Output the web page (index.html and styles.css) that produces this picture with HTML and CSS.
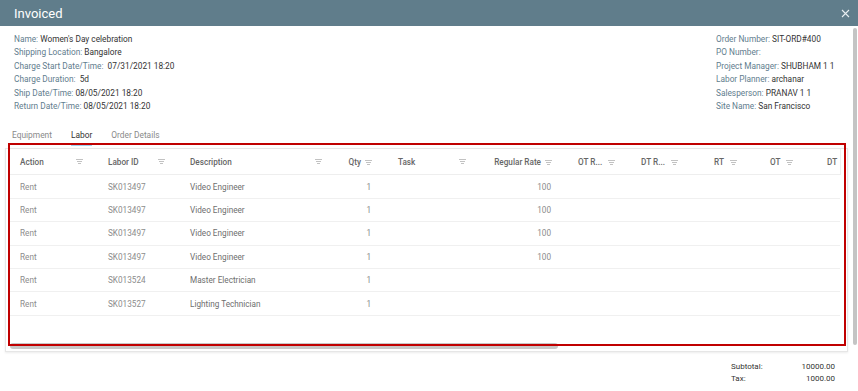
FILE: index.html
```html
<!DOCTYPE html>
<html lang="en">
<head>
<meta charset="UTF-8">
<title>Invoiced</title>
<link rel="stylesheet" href="styles.css">
</head>
<body>
<div class="modal">
  <header class="modal-head">
    <span class="modal-title">Invoiced</span>
    <svg class="modal-close" width="9" height="9" viewBox="0 0 9 9"><path d="M1 1L8 8M8 1L1 8" stroke="#e8eef1" stroke-width="1.1"/></svg>
  </header>

  <div class="modal-body">
    <div class="info">
      <div class="info-col">
        <div><span class="lbl">Name:</span> Women's Day celebration</div>
        <div><span class="lbl">Shipping Location:</span> Bangalore</div>
        <div><span class="lbl">Charge Start Date/Time:</span>&nbsp; 07/31/2021 18:20</div>
        <div><span class="lbl">Charge Duration:</span>&nbsp; 5d</div>
        <div><span class="lbl">Ship Date/Time:</span> 08/05/2021 18:20</div>
        <div><span class="lbl">Return Date/Time:</span> 08/05/2021 18:20</div>
      </div>
      <div class="info-col right">
        <div><span class="lbl">Order Number:</span> SIT-ORD#400</div>
        <div><span class="lbl">PO Number:</span></div>
        <div><span class="lbl">Project Manager:</span> SHUBHAM 1 1</div>
        <div><span class="lbl">Labor Planner:</span> archanar</div>
        <div><span class="lbl">Salesperson:</span> PRANAV 1 1</div>
        <div><span class="lbl">Site Name:</span> San Francisco</div>
      </div>
    </div>

    <div class="tabs">
      <span class="tab">Equipment</span>
      <span class="tab active">Labor</span>
      <span class="tab">Order Details</span>
    </div>

    <div class="grid-area">
      <div class="grid">
        <table>
          <colgroup>
            <col style="width:88px"><col style="width:82px"><col style="width:154px"><col style="width:54px">
            <col style="width:90px"><col style="width:90px"><col style="width:63px"><col style="width:73px">
            <col style="width:56px"><col style="width:57px"><col style="width:23px">
          </colgroup>
          <thead>
            <tr>
              <th class="wide"><span class="hd">Action</span><i class="flt"></i></th>
              <th class="wide"><span class="hd">Labor ID</span><i class="flt"></i></th>
              <th><span class="hd">Description</span><i class="flt"></i></th>
              <th class="num"><span class="hd">Qty</span><i class="flt"></i></th>
              <th><span class="hd">Task</span><i class="flt"></i></th>
              <th class="num"><span class="hd">Regular Rate</span><i class="flt"></i></th>
              <th class="tight"><span class="hd">OT R...</span><i class="flt"></i></th>
              <th class="tight"><span class="hd">DT R...</span><i class="flt"></i></th>
              <th class="tight"><span class="hd">RT</span><i class="flt"></i></th>
              <th class="tight"><span class="hd">OT</span><i class="flt"></i></th>
              <th class="last"><span class="hd">DT</span></th>
            </tr>
          </thead>
          <tbody>
            <tr><td>Rent</td><td>SK013497</td><td class="desc">Video Engineer</td><td class="num">1</td><td></td><td class="num">100</td><td></td><td></td><td></td><td></td><td></td></tr>
            <tr><td>Rent</td><td>SK013497</td><td class="desc">Video Engineer</td><td class="num">1</td><td></td><td class="num">100</td><td></td><td></td><td></td><td></td><td></td></tr>
            <tr><td>Rent</td><td>SK013497</td><td class="desc">Video Engineer</td><td class="num">1</td><td></td><td class="num">100</td><td></td><td></td><td></td><td></td><td></td></tr>
            <tr><td>Rent</td><td>SK013497</td><td class="desc">Video Engineer</td><td class="num">1</td><td></td><td class="num">100</td><td></td><td></td><td></td><td></td><td></td></tr>
            <tr><td>Rent</td><td>SK013524</td><td class="desc">Master Electrician</td><td class="num">1</td><td></td><td class="num"></td><td></td><td></td><td></td><td></td><td></td></tr>
            <tr><td>Rent</td><td>SK013527</td><td class="desc">Lighting Technician</td><td class="num">1</td><td></td><td class="num"></td><td></td><td></td><td></td><td></td><td></td></tr>
          </tbody>
        </table>
        <div class="hscroll"><div class="hthumb"></div></div>
      </div>
      <div class="highlight"></div>
    </div>

    <div class="totals">
      <div class="trow"><span>Subtotal:</span><span>10000.00</span></div>
      <div class="trow"><span>Tax:</span><span>1000.00</span></div>
    </div>
  </div>
  <div class="vscroll"></div>
</div>
</body>
</html>
```

FILE: styles.css
```css
body{margin:0;font-family:Roboto, "Liberation Sans", sans-serif;background:#fff;color:#333;}
.modal{position:relative;width:858px;height:391px;overflow:hidden;}
.modal-head{height:26px;background:#607d8b;display:flex;align-items:center;justify-content:space-between;padding:0 8px 0 14px;color:#fff;}
.modal-title{font-size:13px;}
/* scroll thumb on the right */
.vscroll{position:absolute;right:1px;top:28px;width:4px;height:317px;background:#c4c4c4;border-radius:2px;}

.modal-body{padding:0 12px 0 0;}
.info{display:flex;justify-content:space-between;padding:7px 0 0 14px;font-size:8.3px;line-height:13.4px;}
.info-col.right{width:130px;}
.lbl{color:#5f7d8e;}

.tabs{display:flex;padding:17px 0 0 12px;font-size:8.4px;color:#8a8a8a;height:18px;box-sizing:content-box;}
.tab{margin-right:19px;height:14px;}
.tab.active{color:#333;border-bottom:2px solid #9fd3ef;}

.grid-area{position:relative;margin:0 0 0 5px;}
.grid{border:1px solid #e6e6e6;box-shadow:0 1px 2px rgba(0,0,0,.08);height:202px;overflow:hidden;position:relative;margin-right:-2px;}
table{border-collapse:collapse;table-layout:fixed;width:830px;margin-left:4px;font-size:8.2px;}
th{height:25px;text-align:left;font-weight:500;color:#666;padding:0 0 0 10px;border-bottom:1px solid #eee;white-space:nowrap;}
th .hd{display:inline-block;}
th .flt{display:inline-block;float:right;margin:2px 12px 0 0;width:7px;height:5px;background:linear-gradient(#c2c2c2,#c2c2c2) 0 0/7px 1px no-repeat,linear-gradient(#c2c2c2,#c2c2c2) 1px 2px/5px 1px no-repeat,linear-gradient(#c2c2c2,#c2c2c2) 2px 4px/3px 1px no-repeat;}
th.wide .flt{margin-right:15px;}
th.num{text-align:right;padding-right:16px;}
th.num .flt{float:none;margin:0 0 0 4px;}
th.tight .flt{float:none;margin:0 0 0 6px;}
th.last{border-right:1px solid #eee;}
td{height:22.4px;padding:0 0 0 10px;color:#8c8c8c;border-bottom:1px solid #f0f0f0;white-space:nowrap;}
td.desc{color:#6e6e6e;}
td.num{text-align:right;padding-right:17px;}
.hscroll{position:absolute;left:4px;bottom:2px;width:548px;height:6px;}
.hthumb{width:100%;height:100%;background:#c8c8c8;border-radius:3px;}
.highlight{position:absolute;left:3px;top:-5px;width:834px;height:199px;border:2px solid #c00000;pointer-events:none;}

.totals{display:flex;flex-direction:column;align-items:flex-end;padding:9px 11px 0 0;font-size:8px;line-height:12px;color:#333;}
.trow{display:flex;justify-content:space-between;width:104px;}
```
